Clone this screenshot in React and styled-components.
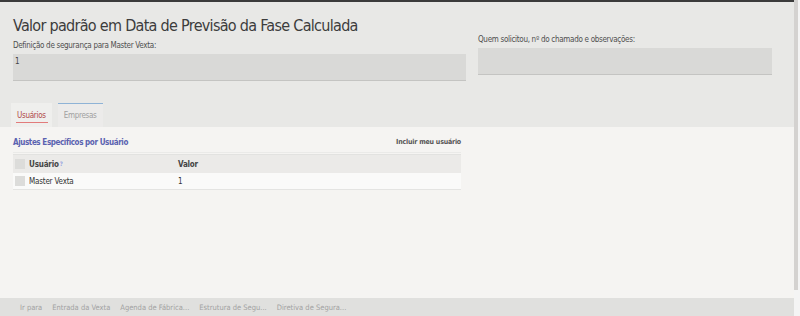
import React from 'react';
import styled, { createGlobalStyle } from 'styled-components';

const GlobalStyle = createGlobalStyle`
  html, body {
    margin: 0;
    padding: 0;
    background: #e8e8e6;
    font-family: "DejaVu Sans Condensed", "DejaVu Sans", sans-serif;
  }
`;

const footerLinks = [
  'Ir para',
  'Entrada da Vexta',
  'Agenda de Fábrica...',
  'Estrutura de Segu...',
  'Diretiva de Segura...',
];

export default function App() {
  return (
    <>
      <GlobalStyle />
      <Window>
        <Main>
          <Header>
            <Title>Valor padrão em Data de Previsão da Fase Calculada</Title>
            <Fields>
              <Field width="453px" offset="0px">
                <Label>Definição de segurança para Master Vexta:</Label>
                <Input height="27px">1</Input>
              </Field>
              <Field width="294px" offset="-6px">
                <Label>Quem solicitou, nº do chamado e observações:</Label>
                <Input height="27px" />
              </Field>
            </Fields>
            <Tabs>
              <Tab active>Usuários</Tab>
              <Tab>Empresas</Tab>
            </Tabs>
          </Header>
          <Content>
            <SectionHead>
              <SectionTitle>Ajustes Específicos por Usuário</SectionTitle>
              <SectionAction>Incluir meu usuário</SectionAction>
            </SectionHead>
            <Table>
              <HeadRow>
                <Cell check>
                  <Check />
                </Cell>
                <Cell width="149px" bold>
                  Usuário<Hint>?</Hint>
                </Cell>
                <Cell bold>Valor</Cell>
              </HeadRow>
              <BodyRow>
                <Cell check>
                  <Check />
                </Cell>
                <Cell width="149px">Master Vexta</Cell>
                <Cell>1</Cell>
              </BodyRow>
            </Table>
          </Content>
          <Footer>
            {footerLinks.map((link) => (
              <FooterLink key={link}>{link}</FooterLink>
            ))}
          </Footer>
        </Main>
        <Scrollbar>
          <ScrollThumb />
        </Scrollbar>
      </Window>
    </>
  );
}

const Window = styled.div`
  display: flex;
  width: 800px;
  height: 316px;
  overflow: hidden;
`;

const Main = styled.div`
  flex: 1;
  display: flex;
  flex-direction: column;
  border-top: 2px solid #3b3b3b;
`;

const Header = styled.div`
  background: #e8e8e6;
  padding: 13px 0 0 13px;
`;

const Title = styled.h1`
  margin: 0;
  font-family: "DejaVu Sans Condensed", sans-serif;
  font-weight: normal;
  font-size: 16px;
  line-height: 21px;
  color: #3c3c3c;
  letter-spacing: -0.7px;
`;

const Fields = styled.div`
  display: flex;
  gap: 12px;
  align-items: flex-start;
  margin-top: 4px;
`;

const Field = styled.div`
  width: ${(p) => p.width};
  margin-top: ${(p) => p.offset};
  display: flex;
  flex-direction: column;
`;

const Label = styled.div`
  font-size: 8px;
  letter-spacing: -0.3px;
  line-height: 12px;
  color: #4f4f4f;
  margin-bottom: 2px;
`;

const Input = styled.div`
  height: ${(p) => p.height};
  box-sizing: border-box;
  background: #d9d9d7;
  border-bottom: 1px solid #c4c4c2;
  padding: 3px 2px;
  font-size: 8px;
  line-height: 10px;
  color: #444;
`;

const Tabs = styled.div`
  display: flex;
  gap: 6px;
  margin-top: 22px;
  margin-left: -2px;
`;

const Tab = styled.div`
  height: 24px;
  box-sizing: border-box;
  padding: 0 6px;
  display: flex;
  align-items: center;
  font-size: 8px;
  letter-spacing: -0.3px;
  color: ${(p) => (p.active ? '#b04848' : '#a0a0a0')};
  background: ${(p) => (p.active ? '#efefed' : '#ecebea')};
  border-top: 1px solid ${(p) => (p.active ? 'transparent' : '#8fb3d6')};
  position: relative;
  &::after {
    content: '';
    display: ${(p) => (p.active ? 'block' : 'none')};
    position: absolute;
    left: 5px;
    right: 4px;
    bottom: 4px;
    height: 1px;
    background: #e27b7b;
  }
`;

const Content = styled.div`
  flex: 1;
  background: #f5f4f2;
  padding: 8px 0 0 13px;
`;

const SectionHead = styled.div`
  width: 448px;
  display: flex;
  justify-content: space-between;
  align-items: center;
  height: 14px;
  border-bottom: 1px solid #eaeae8;
  padding-bottom: 3px;
`;

const SectionTitle = styled.div`
  font-size: 8px;
  letter-spacing: -0.4px;
  font-weight: bold;
  color: #5a62b0;
`;

const SectionAction = styled.div`
  font-size: 7px;
  letter-spacing: -0.2px;
  font-weight: bold;
  color: #555;
`;

const Table = styled.div`
  width: 448px;
  margin-top: 1px;
`;

const HeadRow = styled.div`
  display: flex;
  align-items: center;
  height: 18px;
  background: #ebeae8;
  border-top: 1px solid #e2e2e0;
`;

const BodyRow = styled.div`
  display: flex;
  align-items: center;
  height: 16px;
  background: #fafaf9;
  border-bottom: 1px solid #e4e4e2;
`;

const Cell = styled.div`
  box-sizing: border-box;
  width: ${(p) => (p.check ? '16px' : p.width || 'auto')};
  padding-left: ${(p) => (p.check ? '2px' : '0')};
  font-size: 8px;
  letter-spacing: -0.2px;
  font-weight: ${(p) => (p.bold ? 'bold' : 'normal')};
  color: ${(p) => (p.bold ? '#444' : '#333')};
  display: flex;
  align-items: center;
`;

const Check = styled.div`
  width: 10px;
  height: 10px;
  background: #dcdcda;
`;

const Hint = styled.span`
  font-size: 6px;
  color: #9aa6e0;
  align-self: flex-start;
  margin-left: 1px;
`;

const Footer = styled.div`
  height: 18px;
  background: #e0e0de;
  display: flex;
  align-items: center;
  gap: 10px;
  padding-left: 20px;
`;

const FooterLink = styled.span`
  font-size: 7.5px;
  color: #a2a2a2;
`;

const Scrollbar = styled.div`
  width: 6px;
  background: #f4f4f4;
  display: flex;
`;

const ScrollThumb = styled.div`
  width: 4px;
  height: 290px;
  background: #d4d2d0;
`;
